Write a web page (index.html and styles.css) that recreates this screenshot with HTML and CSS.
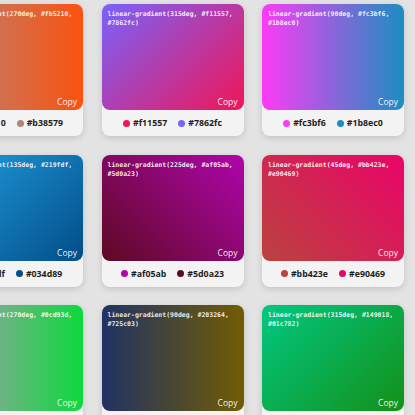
FILE: index.html
```html
<!DOCTYPE html>
<html lang="en">
<head>
<meta charset="utf-8">
<title>Gradient palette</title>
<link rel="stylesheet" href="styles.css">
</head>
<body>
<main class="grid">
  <article class="card">
    <div class="swatch" style="background: linear-gradient(270deg, #fb5210, #b38579)">
      <code class="css">linear-gradient(270deg, #fb5210, #b38579)</code>
      <button class="copy">Copy</button>
    </div>
    <div class="stops">
      <span class="stop"><i class="dot" style="background:#fb5210"></i>#fb5210</span>
      <span class="stop"><i class="dot" style="background:#b38579"></i>#b38579</span>
    </div>
  </article>
  <article class="card">
    <div class="swatch" style="background: linear-gradient(315deg, #f11557, #7862fc)">
      <code class="css">linear-gradient(315deg, #f11557, #7862fc)</code>
      <button class="copy">Copy</button>
    </div>
    <div class="stops">
      <span class="stop"><i class="dot" style="background:#f11557"></i>#f11557</span>
      <span class="stop"><i class="dot" style="background:#7862fc"></i>#7862fc</span>
    </div>
  </article>
  <article class="card">
    <div class="swatch" style="background: linear-gradient(90deg, #fc3bf6, #1b8ec0)">
      <code class="css">linear-gradient(90deg, #fc3bf6, #1b8ec0)</code>
      <button class="copy">Copy</button>
    </div>
    <div class="stops">
      <span class="stop"><i class="dot" style="background:#fc3bf6"></i>#fc3bf6</span>
      <span class="stop"><i class="dot" style="background:#1b8ec0"></i>#1b8ec0</span>
    </div>
  </article>

  <article class="card">
    <div class="swatch" style="background: linear-gradient(135deg, #219fdf, #034d89)">
      <code class="css">linear-gradient(135deg, #219fdf, #034d89)</code>
      <button class="copy">Copy</button>
    </div>
    <div class="stops">
      <span class="stop"><i class="dot" style="background:#219fdf"></i>#219fdf</span>
      <span class="stop"><i class="dot" style="background:#034d89"></i>#034d89</span>
    </div>
  </article>
  <article class="card">
    <div class="swatch" style="background: linear-gradient(225deg, #af05ab, #5d0a23)">
      <code class="css">linear-gradient(225deg, #af05ab, #5d0a23)</code>
      <button class="copy">Copy</button>
    </div>
    <div class="stops">
      <span class="stop"><i class="dot" style="background:#af05ab"></i>#af05ab</span>
      <span class="stop"><i class="dot" style="background:#5d0a23"></i>#5d0a23</span>
    </div>
  </article>
  <article class="card">
    <div class="swatch" style="background: linear-gradient(45deg, #bb423e, #e90469)">
      <code class="css">linear-gradient(45deg, #bb423e, #e90469)</code>
      <button class="copy">Copy</button>
    </div>
    <div class="stops">
      <span class="stop"><i class="dot" style="background:#bb423e"></i>#bb423e</span>
      <span class="stop"><i class="dot" style="background:#e90469"></i>#e90469</span>
    </div>
  </article>

  <article class="card">
    <div class="swatch" style="background: linear-gradient(270deg, #0cd93d, #b09ab4)">
      <code class="css">linear-gradient(270deg, #0cd93d, #b09ab4)</code>
      <button class="copy">Copy</button>
    </div>
    <div class="stops">
      <span class="stop"><i class="dot" style="background:#0cd93d"></i>#0cd93d</span>
      <span class="stop"><i class="dot" style="background:#b09ab4"></i>#b09ab4</span>
    </div>
  </article>
  <article class="card">
    <div class="swatch" style="background: linear-gradient(90deg, #203264, #725c03)">
      <code class="css">linear-gradient(90deg, #203264, #725c03)</code>
      <button class="copy">Copy</button>
    </div>
    <div class="stops">
      <span class="stop"><i class="dot" style="background:#203264"></i>#203264</span>
      <span class="stop"><i class="dot" style="background:#725c03"></i>#725c03</span>
    </div>
  </article>
  <article class="card">
    <div class="swatch" style="background: linear-gradient(315deg, #149018, #01c782)">
      <code class="css">linear-gradient(315deg, #149018, #01c782)</code>
      <button class="copy">Copy</button>
    </div>
    <div class="stops">
      <span class="stop"><i class="dot" style="background:#149018"></i>#149018</span>
      <span class="stop"><i class="dot" style="background:#01c782"></i>#01c782</span>
    </div>
  </article>
</main>
</body>
</html>
```

FILE: styles.css
```css
html, body {
  margin: 0;
  padding: 0;
  background: #e3e3e3;
  overflow: hidden;
}

/* the palette is wider than the window and scrolled a little to the right */
.grid {
  display: grid;
  grid-template-columns: repeat(3, 142px);
  column-gap: 18.5px;
  row-gap: 18.5px;
  padding-top: 4px;
  margin-left: -59px;
}

.card {
  height: 132px;
  display: flex;
  flex-direction: column;
  background: #f3f3f3;
  border-radius: 8px;
  box-shadow: 0 2px 6px rgba(0, 0, 0, 0.14);
}

.swatch {
  height: 106px;
  box-sizing: border-box;
  padding: 6px 6px 3px 6px;
  border-radius: 8px;
  display: flex;
  flex-direction: column;
  justify-content: space-between;
}

.css {
  font-family: "DejaVu Sans Mono", monospace;
  font-weight: 700;
  font-size: 6.5px;
  line-height: 9px;
  color: rgba(255, 255, 255, 0.9);
}

.copy {
  align-self: flex-end;
  border: 0;
  padding: 0;
  background: none;
  font-family: "Open Sans", sans-serif;
  font-size: 8.5px;
  line-height: 11px;
  color: rgba(255, 255, 255, 0.95);
  cursor: pointer;
}

.stops {
  flex: 1;
  display: flex;
  align-items: center;
  justify-content: center;
  gap: 11px;
}

.stop {
  display: flex;
  align-items: center;
  gap: 3px;
  font-family: "Open Sans", sans-serif;
  font-weight: 700;
  font-size: 8.8px;
  color: #1e1e1e;
}

.dot {
  width: 7px;
  height: 7px;
  border-radius: 50%;
}
```
